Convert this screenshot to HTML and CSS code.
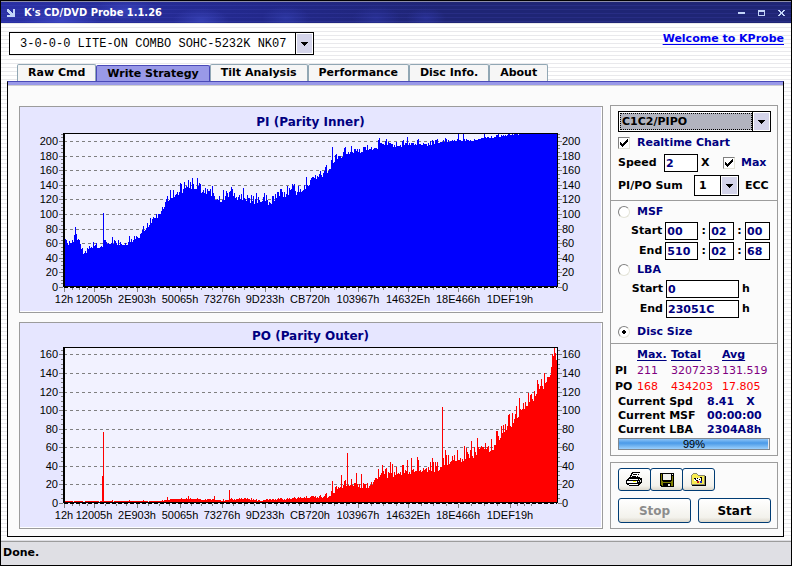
FILE: index.html
```html
<!DOCTYPE html>
<html lang="en">
<head>
  <meta charset="UTF-8" />
  <meta name="viewport" content="width=device-width, initial-scale=1" />
  <title>K's CD/DVD Probe 1.1.26</title>
  <link rel="stylesheet" href="styles.css">
</head>
<body>
  <div class="window">
    <header class="titlebar">
      <svg class="app-icon" width="8" height="8" viewBox="0 0 8 8"><path d="M0 0h2v1h1v1h1v1h1v1h1V0h2v8H0V6h3V5H2V4H1V3H0z" fill="#c3d4f8"/></svg>
      <h1>K's CD/DVD Probe 1.1.26</h1>
      <div class="window-buttons">
        <button aria-label="Minimize"><svg width="8" height="8" viewBox="0 0 8 8"><path d="M1 3h7v2H1z" fill="#c3d4f8"/></svg></button>
        <button aria-label="Maximize"><svg width="8" height="8" viewBox="0 0 8 8"><path d="M1 1h7v6H1zM2 3v3h5V3z" fill="#c3d4f8" fill-rule="evenodd"/></svg></button>
        <button aria-label="Close"><svg width="8" height="8" viewBox="0 0 8 8"><path d="M1 1h2v1h1v1h1V2h1V1h2v1H7v1H6v2h1v1h1v1H6V6H5V5H4v1H3v1H1V6h1V5h1V3H2V2H1z" fill="#c3d4f8"/></svg></button>
      </div>
    </header>

    <div class="toolbar">
      <div class="select drive">
        <select aria-label="Drive">
          <option>3-0-0-0 LITE-ON COMBO SOHC-5232K NK07</option>
        </select>
      </div>
      <a href="#">Welcome to KProbe</a>
    </div>

    <nav class="tabs">
      <button>Raw Cmd</button>
      <button class="active">Write Strategy</button>
      <button>Tilt Analysis</button>
      <button>Performance</button>
      <button>Disc Info.</button>
      <button>About</button>
    </nav>

    <main class="panel">
      <section class="charts">
        <div class="chart" id="piChart"></div>
        <div class="chart" id="poChart"></div>
      </section>

      <aside class="side">
        <div class="box">
          <div class="group options">
            <div class="select mode">
              <select aria-label="Test mode">
                <option>C1C2/PIPO</option>
              </select>
            </div>
            <div class="row choice">
              <input type="checkbox" id="realtime" checked>
              <label for="realtime">Realtime Chart</label>
            </div>
            <div class="row tall speed">
              <label for="speed">Speed</label>
              <input type="text" id="speed" value="2">
              <span>X</span>
              <input type="checkbox" id="max" checked>
              <label for="max" class="blue">Max</label>
            </div>
            <div class="row sum">
              <label for="sum">PI/PO Sum</label>
              <div class="select">
                <select id="sum"><option>1</option></select>
              </div>
              <span>ECC</span>
            </div>
          </div>

          <div class="group range">
            <div class="row choice">
              <input type="radio" name="range" id="msf">
              <label for="msf">MSF</label>
            </div>
            <div class="row tall field">
              <label for="msfStart">Start</label>
              <input type="text" class="minutes" id="msfStart" value="00"><span>:</span>
              <input type="text" class="short" aria-label="Start seconds" value="02"><span>:</span>
              <input type="text" class="short" aria-label="Start frames" value="00">
            </div>
            <div class="row tall field">
              <label for="msfEnd">End</label>
              <input type="text" class="minutes" id="msfEnd" value="510"><span>:</span>
              <input type="text" class="short" aria-label="End seconds" value="02"><span>:</span>
              <input type="text" class="short" aria-label="End frames" value="68">
            </div>
            <div class="row choice">
              <input type="radio" name="range" id="lba">
              <label for="lba">LBA</label>
            </div>
            <div class="row tall field">
              <label for="lbaStart">Start</label>
              <input type="text" class="address" id="lbaStart" value="0"><span>h</span>
            </div>
            <div class="row tall field">
              <label for="lbaEnd">End</label>
              <input type="text" class="address" id="lbaEnd" value="23051C"><span>h</span>
            </div>
            <div class="row choice disc">
              <input type="radio" name="range" id="disc" checked>
              <label for="disc">Disc Size</label>
            </div>
          </div>

          <div class="group results">
            <table>
              <thead>
                <tr><th></th><th>Max.</th><th>Total</th><th>Avg</th></tr>
              </thead>
              <tbody>
                <tr class="pi"><th>PI</th><td>211</td><td>3207233</td><td>131.519</td></tr>
                <tr class="po"><th>PO</th><td>168</td><td>434203</td><td>17.805</td></tr>
              </tbody>
            </table>
            <dl>
              <dt>Current Spd</dt><dd>8.41<span class="unit">X</span></dd>
              <dt>Current MSF</dt><dd>00:00:00</dd>
              <dt>Current LBA</dt><dd>2304A8h</dd>
            </dl>
            <div class="progress" role="progressbar" aria-valuenow="99">
              <div class="fill" style="width: 99%"></div>
              <span>99%</span>
            </div>
          </div>
        </div>

        <div class="box actions">
          <div class="icons">
            <button aria-label="Print">
              <svg width="17" height="15" viewBox="0 0 17 15">
                <path d="M6 0h8v1h-1v2h-1v2h2v1h2v5h-1v1h-1v1h-1v1H3v-1H1v-1H0V8h1V7h1V6h1V5h1V3h1V1h1z" fill="#000"/>
                <path d="M7 1h6v1h-1v2h-1v1H5V4h1V2h1z" fill="#fff"/>
                <path d="M7 2h4v1H7zM6 4h4v1H6z" fill="#000"/>
                <path d="M3 7h9v1H3zM1 9h10v2H1zM3 12h9v1H3z" fill="#fff"/>
                <path d="M13 7h1v1h-1zM12 9h1v1h-1zM14 8h1v2h-1z" fill="#ddd"/>
                <path d="M7 9h3v1H7z" fill="#ff0"/>
              </svg>
            </button>
            <button aria-label="Save">
              <svg width="14" height="14" viewBox="0 0 14 14">
                <path d="M0 0h14v14H1v-1H0z" fill="#000"/>
                <path d="M1 1h1v7h1v1h8V8h1V3h1v10h-2v-3H3v3H2v-1H1z" fill="#808000"/>
                <path d="M3 1h8v6H3zM12 1h1v1h-1zM8 11h2v2H8z" fill="#f0f0ec"/>
              </svg>
            </button>
            <button aria-label="Open folder">
              <svg width="15" height="13" viewBox="0 0 15 13">
                <path d="M1 1h1V0h4v1h1v1h7v10H0V2h1z" fill="#8a8a70"/>
                <path d="M1 2h1V1h4v1h1v1h6v8H1z" fill="#f8ec50"/>
                <path d="M14 3h1v10H1v-1h13z" fill="#000"/>
                <path d="M3 5h8v3H3z" fill="#fff"/>
                <path d="M3 5h2v1H3zM6 5h1v1H6zM9 4h2v1H9zM4 6h1v1H4zM8 6h1v1H8zM10 5h1v3h-1zM5 7h2v1H5z" fill="#000"/>
                <path d="M6 8h2v2H6z" fill="#d02020"/><path d="M9 8h2v2H9z" fill="#2030c0"/>
              </svg>
            </button>
          </div>
          <div class="commands">
            <button disabled>Stop</button>
            <button>Start</button>
          </div>
        </div>
      </aside>
    </main>

    <footer class="statusbar">Done.</footer>
  </div>

  <script src="charts.js"></script>
</body>
</html>
```

FILE: styles.css
```css
*,
*::after {
  margin: 0;
  padding: 0;
  box-sizing: border-box;
}

body {
  font-family: 'DejaVu Sans', Verdana, sans-serif;
  font-size: 11px;
  font-weight: bold;
  line-height: 14px;
  color: #000;
}

button,
input,
select {
  font: inherit;
  color: inherit;
  border-radius: 0;
}

button,
select,
input {
  appearance: none;
  outline: none;
}

svg {
  display: block;
  shape-rendering: crispEdges;
}

.window {
  display: flex;
  flex-direction: column;
  min-height: 100vh;
  border: 1px solid #000;
  background: repeating-linear-gradient(#fff 0, #fff 2px, #e9e9ec 2px, #e9e9ec 3px, #fff 3px, #fff 4px);
}

/* Title bar */
.titlebar {
  display: flex;
  align-items: center;
  height: 22px;
  padding: 0 6px;
  border-top: 1px solid #8c8ca8;
  color: #fff;
  background:
    repeating-linear-gradient(transparent 0 3px, rgba(90, 90, 220, 0.15) 3px 4px),
    radial-gradient(ellipse 40px 14px at 60px 18px, #3a44c0, transparent),
    radial-gradient(ellipse 34px 12px at 125px 8px, #3640b8, transparent),
    radial-gradient(ellipse 28px 12px at 200px 18px, #343eb0, transparent),
    radial-gradient(ellipse 24px 12px at 285px 16px, #2c36a0, transparent),
    radial-gradient(ellipse 24px 12px at 375px 16px, #283094, transparent),
    radial-gradient(ellipse 20px 10px at 425px 16px, #283094, transparent),
    linear-gradient(90deg, #2a30a4, #22288a 260px, #1f2575 440px);
}

.titlebar h1 {
  flex: 1;
  margin-left: 9px;
  font-family: 'DejaVu Sans Condensed', Tahoma, sans-serif;
  font-size: 11px;
}

.window-buttons {
  display: flex;
  gap: 12px;
}

.window-buttons button {
  border: none;
  background: none;
}

/* Toolbar */
.toolbar {
  display: flex;
  justify-content: space-between;
  align-items: flex-start;
  padding: 9px 7px 9px 8px;
}

.toolbar a {
  color: #0000f0;
  text-underline-offset: 2px;
}

.select {
  position: relative;
  border: 1px solid #000;
  background: #fff;
}

.select select {
  display: block;
  width: 100%;
  height: 100%;
  padding-left: 4px;
  border: none;
  background: none;
}

.select::after {
  content: '';
  position: absolute;
  top: 0;
  right: 0;
  bottom: 0;
  width: 17px;
  border: 1px solid #fff;
  box-shadow: -1px 0 #000;
  pointer-events: none;
  background: #d4d4ea url("data:image/svg+xml,%3Csvg xmlns='http://www.w3.org/2000/svg' width='7' height='4' shape-rendering='crispEdges'%3E%3Cpath d='M0 0h7v1H6v1H5v1H4v1H3V3H2V2H1V1H0z'/%3E%3C/svg%3E") no-repeat center;
}

.drive {
  width: 305px;
  height: 23px;
}

.drive select {
  padding-left: 10px;
  font-family: 'Liberation Mono', monospace;
  font-size: 12px;
  font-weight: normal;
}

/* Tabs */
.tabs {
  display: flex;
  align-items: flex-end;
  padding-left: 16px;
}

.tabs button {
  height: 17px;
  padding: 0 10px;
  border: 1px solid #91a7b4;
  border-bottom: none;
  border-radius: 2px 2px 0 0;
  background: #f6f6f6;
}

.tabs .active {
  height: 16px;
  border-color: #4a4ab8;
  background: #9999e8;
}

/* Main panel */
.panel {
  flex: 1;
  display: flex;
  align-items: flex-end;
  gap: 7px;
  margin: 0 7px 0 6px;
  padding: 23px 5px 7px 11px;
  border: 1px solid #000;
  border-top-color: #4a4ab8;
  background: #fbfbfb;
  box-shadow: inset 0 3px #9999e8, inset 0 4px #cfcfcf;
}

.charts {
  flex: 1;
  display: flex;
  flex-direction: column;
  gap: 9px;
}

.chart {
  border: 1px solid #9c9c9c;
  background: #e6e6ff;
}

.chart svg {
  width: 100%;
  height: auto;
  box-shadow: inset -1px -1px #fff;
}

.chart text {
  font-family: 'Liberation Sans', Arial, sans-serif;
  font-size: 11px;
  font-weight: normal;
}

.chart .title {
  font-family: 'DejaVu Sans', Verdana, sans-serif;
  font-size: 12px;
  font-weight: bold;
  fill: #000080;
}

/* Side column */
.side {
  display: flex;
  flex-direction: column;
  gap: 6px;
  width: 168px;
}

.box {
  border: 1px solid #9c9c9c;
}

.group {
  display: flex;
  flex-direction: column;
  padding: 0 7px;
}

.group + .group {
  border-top: 1px solid #9c9c9c;
}

.row {
  display: flex;
  align-items: center;
  height: 16px;
}

.tall {
  height: 18px;
}

.choice {
  gap: 7px;
}

.choice label,
.blue {
  color: #000080;
}

input[type="text"] {
  height: 18px;
  padding: 0 1px;
  border: 1px solid #000;
  background: #fff;
  color: #000080;
}

input[type="checkbox"],
input[type="radio"] {
  width: 12px;
  height: 12px;
  border: 1px solid;
  border-color: #808080 #e4e4d8 #e4e4d8 #808080;
  background: #fff no-repeat center;
}

input[type="radio"] {
  border-radius: 50%;
}

input[type="checkbox"]:checked {
  background-image: url("data:image/svg+xml,%3Csvg xmlns='http://www.w3.org/2000/svg' width='8' height='8' shape-rendering='crispEdges'%3E%3Cpath d='M0 3h1v1h1v1h1V4h1V3h1V2h1V1h1V0h1v3H7v1H6v1H5v1H4v1H3v1H2V7H1V6H0z'/%3E%3C/svg%3E");
}

input[type="radio"]:checked {
  background-image: radial-gradient(circle, #000 2px, transparent 2px);
}

.options {
  gap: 3px;
  padding-top: 5px;
  padding-bottom: 4px;
}

.mode {
  width: 153px;
  height: 21px;
}

.mode select {
  width: 132px;
  height: 17px;
  margin: 1px;
  padding-left: 1px;
  border: 1px dotted #000;
  background: #b2b4bf;
}

.speed {
  gap: 3px;
}

.speed label:first-child {
  width: 43px;
}

.speed input[type="text"] {
  width: 34px;
}

.speed span {
  flex: 0 0 19px;
}

.speed .blue {
  margin-left: 3px;
}

.sum {
  gap: 6px;
  height: 21px;
}

.sum label {
  width: 70px;
  white-space: nowrap;
}

.sum .select {
  width: 45px;
  height: 21px;
}

.range {
  gap: 2px;
  padding-top: 3px;
  padding-bottom: 3px;
}

.field label {
  width: 45px;
  margin-right: 3px;
  text-align: right;
}

.field span {
  width: 11px;
  text-align: center;
}

.minutes {
  width: 33px;
}

.short {
  width: 25px;
}

.address {
  width: 73px;
}

.address + span {
  width: 14px;
}

.disc {
  margin-top: 4px;
}

.results {
  padding-top: 3px;
  padding-bottom: 5px;
}

.results table {
  width: 162px;
  margin-left: -3px;
  table-layout: fixed;
  border-collapse: collapse;
}

.results th,
.results td {
  height: 16px;
  text-align: left;
  white-space: nowrap;
}

.results td {
  font-weight: normal;
}

.results thead th {
  color: #000080;
  text-decoration: underline;
  text-underline-offset: 2px;
}

.results th:nth-child(1) {
  width: 22px;
}

.results th:nth-child(2) {
  width: 34px;
}

.results th:nth-child(3) {
  width: 51px;
}

.pi td {
  color: #800080;
}

.po td {
  color: #f00;
}

.results dl {
  display: grid;
  grid-template-columns: 89px 1fr;
  white-space: nowrap;
}

.results dd {
  color: #000080;
}

.unit {
  margin-left: 12px;
}

.progress {
  position: relative;
  height: 12px;
  margin-top: 1px;
  border: 1px solid #808890;
  background: #e8e8ec;
  text-align: center;
}

.fill {
  height: 10px;
  background: linear-gradient(#8cc4f8, #4a9ae8 40%, #9cd0fc);
}

.progress span {
  position: absolute;
  inset: 0;
  font-family: 'Liberation Sans', Arial, sans-serif;
  font-weight: normal;
  line-height: 10px;
}

/* Buttons */
.actions {
  padding: 5px 6px 5px 7px;
}

.actions button {
  display: flex;
  align-items: center;
  justify-content: center;
  border: 1px solid #003c74;
  border-radius: 3px;
  background: linear-gradient(#fff, #f3f2ec 80%, #dcd8cc);
}

.icons {
  display: flex;
  margin-bottom: 7px;
}

.icons button {
  width: 33px;
  height: 23px;
  margin-right: -1px;
}

.commands {
  display: flex;
  gap: 7px;
}

.commands button {
  flex: 1;
  height: 25px;
  font-size: 12px;
}

.commands button:disabled {
  color: #8c8c8c;
}

/* Status bar */
.statusbar {
  height: 28px;
  padding: 6px 2px;
  border-top: 3px solid #fbfbfb;
  background: #dfdfe4;
  box-shadow: inset 0 1px #dfdfe4, inset 0 2px #9c9c9c;
}
```

FILE: charts.js
```javascript
const LEFT = 44;
const RIGHT = 537;
const BASE = 180;

// [position on the axis, label]
const xLabels = [
  [44, '12h'], [74, '12005h'], [117, '2E903h'], [160, '50065h'],
  [202, '73276h'], [245, '9D233h'], [290, 'CB720h'], [338, '103967h'],
  [388, '14632Eh'], [438, '18E466h'], [490, '1DEF19h']
];

// points: [column, value], noise: [column, amplitude], peaks: single columns
const pi = {
  id: 'piChart',
  title: 'PI (Parity Inner)',
  color: '#00f',
  max: 211,
  top: 26,
  titleY: 19,
  points: [
    [0, 61], [5, 60], [10, 67], [13, 66], [16, 61], [18, 49], [23, 50], [27, 56], [35, 57],
    [42, 61], [52, 62], [56, 58], [60, 57], [65, 62], [70, 67], [75, 70], [80, 78], [85, 88],
    [90, 95], [95, 101], [100, 113], [105, 123], [110, 127], [116, 131], [121, 137], [126, 140],
    [134, 135], [142, 133], [149, 124], [156, 120], [163, 128], [168, 127], [175, 121],
    [190, 118], [200, 121], [206, 113], [210, 122], [217, 125], [224, 131], [228, 141],
    [232, 131], [240, 138], [246, 146], [253, 152], [260, 157], [266, 165], [270, 176],
    [280, 184], [295, 188], [305, 192], [312, 190], [316, 199], [325, 195], [336, 195],
    [345, 198], [355, 198], [361, 195], [370, 198], [380, 200], [392, 201], [410, 201],
    [418, 204], [433, 206], [447, 209], [460, 210], [473, 211], [493, 211]
  ],
  noise: [[0, 8], [40, 9], [70, 7], [110, 12], [140, 13], [200, 10], [230, 13], [300, 11], [355, 8], [385, 3], [460, 2], [493, 0]],
  peaks: { 11: 82, 12: 72, 39: 101, 116: 143, 120: 144, 124: 147, 128: 150, 179: 136, 200: 129, 268: 192, 315: 204, 394: 209, 399: 209, 420: 211, 434: 211 }
};

const po = {
  id: 'poChart',
  title: 'PO (Parity Outer)',
  color: '#f00',
  max: 168,
  top: 24,
  titleY: 17,
  points: [
    [0, 2], [95, 2], [105, 4], [122, 5], [135, 4], [160, 3], [180, 5], [192, 3], [220, 4],
    [236, 6], [260, 7], [266, 9], [272, 16], [282, 20], [290, 20], [303, 19], [311, 26],
    [319, 36], [323, 29], [332, 34], [345, 35], [354, 39], [360, 35], [369, 40], [372, 33],
    [376, 42], [385, 47], [390, 51], [395, 46], [403, 54], [410, 53], [414, 58], [420, 61],
    [426, 58], [434, 69], [440, 82], [447, 88], [453, 92], [456, 105], [462, 108],
    [467, 117], [470, 115], [474, 130], [477, 124], [482, 132], [486, 143], [488, 158],
    [491, 162], [493, 150]
  ],
  noise: [[0, 1], [100, 1], [240, 2], [270, 7], [320, 11], [380, 12], [440, 14], [480, 16], [493, 8]],
  peaks: { 38: 29, 39: 76, 103: 7, 124: 8, 150: 8, 165: 14, 268: 24, 277: 30, 283: 54, 292: 32, 297: 31, 318: 41, 326: 44, 328: 42, 347: 48, 353: 50, 378: 103, 407: 67, 413: 70, 490: 168 }
};

function lerp(points, x) {
  for (let i = 1; i < points.length; i++) {
    const [x0, y0] = points[i - 1];
    const [x1, y1] = points[i];
    if (x <= x1) return y0 + (y1 - y0) * (x - x0) / (x1 - x0);
  }
  return points[points.length - 1][1];
}

function random(seed) {
  const n = Math.sin(seed * 127.1) * 43758.5453;
  return n - Math.floor(n);
}

function drawChart(chart) {
  const y = value => Math.round(BASE - value * (BASE - chart.top) / chart.max);
  const centre = (LEFT + RIGHT) / 2;
  let grid = '';
  let ticks = '';
  let labels = '';
  let bars = '';

  for (let v = 0; v <= chart.max; v += 5) {
    const major = v % 20 === 0;
    const size = major ? 4 : 2;
    ticks += `M${LEFT - 1 - size} ${y(v)}h${size}v1h-${size}z M${RIGHT + 1} ${y(v)}h${size}v1h-${size}z `;
    if (major) {
      if (v > 0) grid += `M${LEFT} ${y(v)}.5H${RIGHT} `;
      labels += `<text x="${LEFT - 6}" y="${y(v) + 4}" text-anchor="end">${v}</text>`;
      labels += `<text x="${RIGHT + 5}" y="${y(v) + 4}">${v}</text>`;
    }
  }

  xLabels.forEach(([x, label], i) => {
    ticks += `M${x} ${BASE + 1}h1v4h-1z `;
    const next = i < xLabels.length - 1 ? xLabels[i + 1][0] : x + 28;
    for (let k = 1; k < 4; k++) {
      ticks += `M${Math.round(x + (next - x) * k / 4)} ${BASE + 1}h1v2h-1z `;
    }
    labels += `<text x="${x}" y="${BASE + 16}" text-anchor="middle">${label}</text>`;
  });

  for (let i = 0; i < RIGHT - LEFT; i++) {
    const spread = (random(i + 1) * random(i + 900) * 1.6 - 0.4) * lerp(chart.noise, i);
    const value = chart.peaks[i] || Math.min(chart.max, lerp(chart.points, i) + spread);
    bars += `M${LEFT + i} ${BASE}V${y(value)}h1V${BASE}z`;
  }

  document.getElementById(chart.id).innerHTML = `
    <svg viewBox="0 0 582 205" role="img" aria-label="${chart.title}">
      <rect x="${LEFT}" y="${chart.top}" width="${RIGHT - LEFT}" height="${BASE - chart.top}" fill="#f2f2ff"/>
      <path d="${grid}" stroke="#808080" stroke-dasharray="3 3"/>
      <path d="${bars}" fill="${chart.color}"/>
      <path d="${ticks}" fill="#808080"/>
      <path d="M${LEFT - 1} ${chart.top}H${RIGHT + 1}V${BASE}H${LEFT - 1}z M${LEFT + 1} ${chart.top + 1}V${BASE - 1}H${RIGHT}V${chart.top + 1}z" fill-rule="evenodd"/>
      <path d="M${LEFT} ${BASE}.5H${RIGHT}" stroke="#000" stroke-dasharray="4 2"/>
      <text class="title" x="${centre}" y="${chart.titleY}" text-anchor="middle">${chart.title}</text>
      ${labels}
    </svg>`;
}

drawChart(pi);
drawChart(po);
```
